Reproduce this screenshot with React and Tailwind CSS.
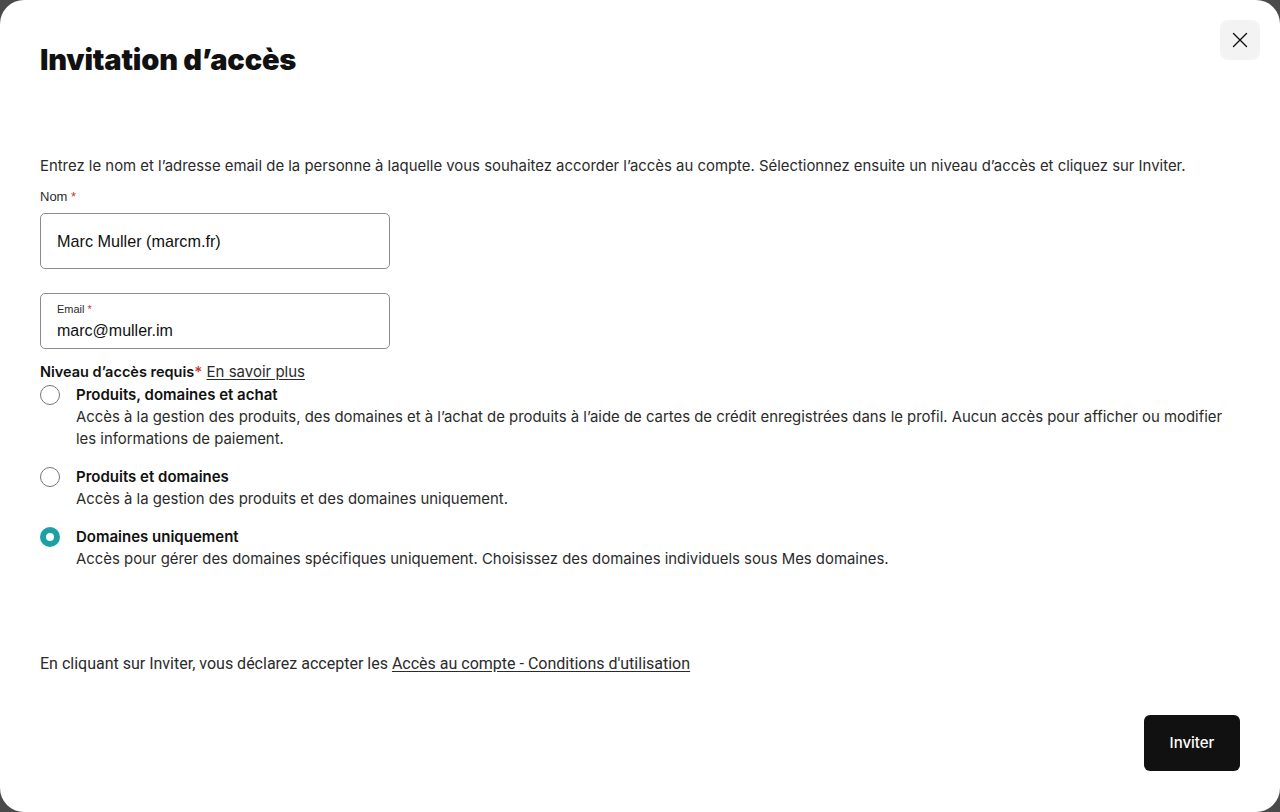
import React from "react";

const options = [
  {
    title: "Produits, domaines et achat",
    desc: "Accès à la gestion des produits, des domaines et à l’achat de produits à l’aide de cartes de crédit enregistrées dans le profil. Aucun accès pour afficher ou modifier les informations de paiement.",
  },
  {
    title: "Produits et domaines",
    desc: "Accès à la gestion des produits et des domaines uniquement.",
  },
  {
    title: "Domaines uniquement",
    desc: "Accès pour gérer des domaines spécifiques uniquement. Choisissez des domaines individuels sous Mes domaines.",
  },
];

const fieldFont = { fontFamily: "'Liberation Sans', Arial, sans-serif" };

function Radio({ checked }) {
  return checked ? (
    <span className="mt-[1px] block h-[20px] w-[20px] shrink-0 rounded-full border-[6px] border-[#1ba0a6] bg-white" />
  ) : (
    <span className="mt-[1px] block h-[20px] w-[20px] shrink-0 rounded-full border border-[#767676] bg-white" />
  );
}

export default function App() {
  const selected = 2;
  return (
    <div className="h-[812px] w-[1280px] bg-[#4a4a4a]" style={{ fontFamily: "Inter, 'Noto Sans', sans-serif" }}>
      <div className="relative flex h-full w-full flex-col rounded-[24px] bg-white px-10 text-[#111]">
        <button className="absolute right-[20px] top-[20px] flex h-10 w-10 items-center justify-center rounded-lg bg-[#f3f3f3]">
          <svg width="16" height="16" viewBox="0 0 16 16" fill="none" stroke="#111" strokeWidth="1.4" strokeLinecap="round">
            <path d="M1.5 1.5l13 13M14.5 1.5l-13 13" />
          </svg>
        </button>

        <h1 className="mt-[41px] text-[29px] font-black leading-[38px] tracking-[-0.2px]">Invitation d’accès</h1>

        <p className="mt-[76px] text-[14.9px] leading-[22px] text-[#2b2b2b]">
          Entrez le nom et l’adresse email de la personne à laquelle vous souhaitez accorder l’accès au compte. Sélectionnez ensuite un niveau d’accès et cliquez sur Inviter.
        </p>

        <label className="mt-[10px] text-[13px] leading-[20px] text-[#2b2b2b]" style={fieldFont}>
          Nom <span className="text-[#d1362f]">*</span>
        </label>
        <div
          className="mt-[6px] flex h-[56px] w-[350px] items-center rounded-[5px] border border-[#8c8c8c] px-[16px] text-[16.2px] text-[#111]"
          style={fieldFont}
        >
          Marc Muller (marcm.fr)
        </div>

        <div
          className="mt-[24px] flex h-[56px] w-[350px] flex-col justify-center rounded-[5px] border border-[#8c8c8c] px-[16px]"
          style={fieldFont}
        >
          <span className="text-[11px] leading-[14px] text-[#2b2b2b]">
            Email <span className="text-[#d1362f]">*</span>
          </span>
          <span className="mt-[5px] text-[16px] leading-[20px] text-[#111]">marc@muller.im</span>
        </div>

        <div className="mt-[12px] text-[15px] leading-[22px]">
          <span className="text-[14.5px] font-semibold">Niveau d’accès requis</span>
          <span className="font-semibold text-[#d1362f]">*</span>{" "}
          <a className="text-[#2b2b2b] underline underline-offset-2">En savoir plus</a>
        </div>

        <div className="mt-[1px] flex flex-col gap-[16px]">
          {options.map((o, i) => (
            <div key={o.title} className="flex items-start gap-4">
              <Radio checked={i === selected} />
              <div className="flex flex-col">
                <span className="text-[15px] font-semibold leading-[22px]">{o.title}</span>
                <span className="text-[14.9px] leading-[22px] text-[#2b2b2b]">{o.desc}</span>
              </div>
            </div>
          ))}
        </div>

        <p className="mt-[83px] text-[16px] leading-[22px] text-[#2b2b2b]" style={{ fontFamily: "Roboto, sans-serif" }}>
          En cliquant sur Inviter, vous déclarez accepter les{" "}
          <a className="underline underline-offset-2">Accès au compte - Conditions d'utilisation</a>
        </p>

        <div className="mt-[40px] flex justify-end">
          <button className="h-[56px] w-[96px] rounded-[6px] bg-[#111] text-[15px] font-medium text-white">Inviter</button>
        </div>
      </div>
    </div>
  );
}
